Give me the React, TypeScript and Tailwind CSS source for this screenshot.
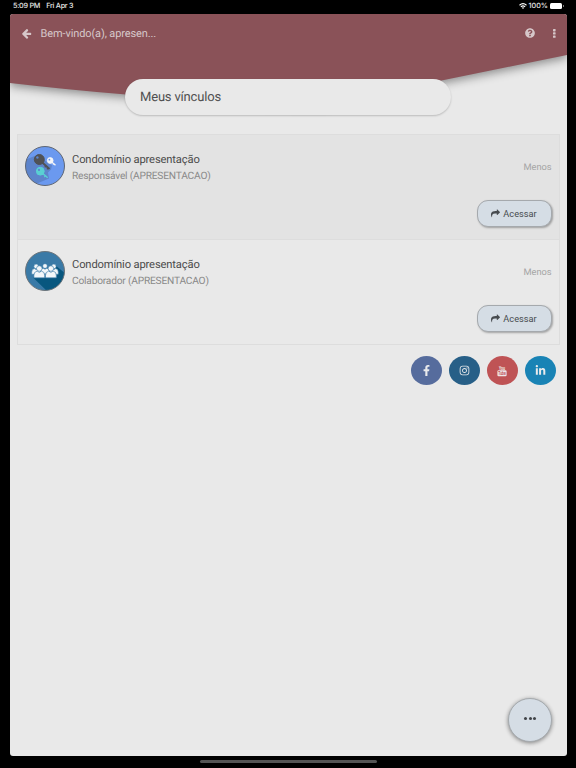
import type { ReactNode } from "react";
import { FaFacebookF, FaInstagram, FaLinkedinIn, FaQuestionCircle } from "react-icons/fa";

interface Membership {
  id: string;
  name: string;
  role: string;
  rowClass: string;
  avatar: ReactNode;
}

const ArrowLeftIcon = () => (
  <svg viewBox="0 0 1792 1792" className="h-[11px] w-[11px] fill-current">
    <path d="M1664 896v128q0 53-32.500 90.500t-84.500 37.500h-704l293 294q38 36 38 90t-38 90l-75 76q-37 37-90 37-52 0-91-37l-651-652q-37-37-37-90 0-52 37-91l651-650q38-38 91-38 52 0 90 38l75 74q38 38 38 91t-38 91l-293 293h704q52 0 84.500 37.500t32.500 90.500z" />
  </svg>
);

const ShareIcon = () => (
  <svg viewBox="0 0 1792 1792" className="h-[9px] w-[9px] fill-current">
    <path d="M1792 640q0 26-19 45l-512 512q-19 19-45 19t-45-19-19-45v-256h-224q-98 0-175.500 6t-154 21.500-133 42.500-105.500 69.500-80 101-48.500 138.500-17.500 181q0 55 5 123 0 6 2.500 23.500t2.500 26.500q0 15-8.500 25t-23.500 10q-16 0-28-17-7-9-13-22t-13.500-30-10.500-24q-127-285-127-451 0-199 53-333 162-403 875-403h224v-256q0-26 19-45t45-19 45 19l512 512q19 19 19 45z" />
  </svg>
);

const YoutubeIcon = () => (
  <svg viewBox="0 0 10 12" className="h-3 w-2.5 overflow-visible">
    <text x="5" y="4.600" textAnchor="middle" textLength="6" lengthAdjust="spacingAndGlyphs" className="fill-[#eee6e6] text-[5px] font-bold">You</text>
    <rect x="0.400" y="5.300" width="9.200" height="6" rx="1.200" fill="#eee6e6" />
    <text x="5" y="9.900" textAnchor="middle" textLength="7.400" lengthAdjust="spacingAndGlyphs" className="fill-[#bf5355] text-[4.500px] font-bold">Tube</text>
  </svg>
);

const KeysAvatar = () => (
  <svg viewBox="0 0 40 40" className="h-10 w-10">
    <clipPath id="keys-clip">
      <circle cx="20" cy="20" r="19.500" />
    </clipPath>
    <g clipPath="url(#keys-clip)">
      <rect width="40" height="40" fill="#6b99ef" />
      <path d="M12 9L1 13.500V34l11 3.500 12-5-1-6 3-3 1-4z" fill="#5d84cb" />
      <g stroke="#505256" fill="#505256">
        <path d="M14.500 14L24.500 23" strokeWidth="2" />
        <path d="M21 20l-1.300 1.300M23.200 22l-1.300 1.300" strokeWidth="1.300" />
        <circle cx="14.300" cy="13.500" r="5" />
      </g>
      <circle cx="12.400" cy="11.500" r="1.200" fill="#5d84cb" />
      <g stroke="#f5f6f8" fill="#f5f6f8">
        <path d="M25 14.500L30.500 19.300" strokeWidth="1.300" />
        <path d="M29 17.800l-1 1" strokeWidth="0.900" />
        <circle cx="25.200" cy="14.500" r="2.900" strokeWidth="0.800" />
      </g>
      <circle cx="24.400" cy="13.700" r="0.900" fill="#6b99ef" />
      <g stroke="#5ad0d3" fill="#5ad0d3">
        <path d="M16 26L22.700 31.800" strokeWidth="1.500" />
        <path d="M20.500 29.800l-1.200 1.200" strokeWidth="1.100" />
        <circle cx="15.300" cy="25.200" r="3.900" />
      </g>
      <circle cx="14" cy="23.900" r="1.100" fill="#5d84cb" />
    </g>
    <circle cx="20" cy="20" r="19.500" fill="none" stroke="#5f6673" />
  </svg>
);

const Person = ({ x, y, scale }: { x: number; y: number; scale: number }) => (
  <g transform={`translate(${x} ${y}) scale(${scale})`} fill="#f3f7fa" stroke="#3a7aa7" strokeWidth="0.700">
    <path d="M-6 12.300V9.500Q-6 5.400-2.400 4.800L0 6.200 2.400 4.800Q6 5.400 6 9.500V12.300Z" />
    <circle cx="0" cy="1.900" r="3.100" />
  </g>
);

const PeopleAvatar = () => (
  <svg viewBox="0 0 40 40" className="h-10 w-10">
    <clipPath id="people-clip">
      <circle cx="20" cy="20" r="19.500" />
    </clipPath>
    <g clipPath="url(#people-clip)">
      <rect width="40" height="40" fill="#3a7aa7" />
      <path d="M30 14L42 24V42H24L8 26.500H32Z" fill="#08577f" />
      <Person x={11.200} y={14} scale={0.750} />
      <Person x={28.800} y={14} scale={0.750} />
      <Person x={20} y={13.600} scale={0.750} />
      <Person x={14.300} y={15.800} scale={0.900} />
      <Person x={25.900} y={15.800} scale={0.900} />
    </g>
    <circle cx="20" cy="20" r="19.500" fill="none" stroke="#6c747a" />
  </svg>
);

const memberships: Membership[] = [
  {
    id: "responsavel",
    name: "Condomínio apresentação",
    role: "Responsável (APRESENTACAO)",
    rowClass: "bg-[#e3e3e3]",
    avatar: <KeysAvatar />
  },
  {
    id: "colaborador",
    name: "Condomínio apresentação",
    role: "Colaborador (APRESENTACAO)",
    rowClass: "bg-[#e9e9e9]",
    avatar: <PeopleAvatar />
  }
];

const socials = [
  { id: "facebook", color: "bg-[#566c9d]", icon: <FaFacebookF className="h-[11px] w-[11px]" /> },
  { id: "instagram", color: "bg-[#275f87]", icon: <FaInstagram className="h-[11px] w-[11px]" /> },
  { id: "youtube", color: "bg-[#bf5355]", icon: <YoutubeIcon /> },
  { id: "linkedin", color: "bg-[#1983b5]", icon: <FaLinkedinIn className="h-[11px] w-[11px]" /> }
];

const StatusBar = () => (
  <div className="flex h-[14px] items-start justify-between pl-[13px] pr-[12px] pt-[1px] font-['Inter','Liberation_Sans',sans-serif] text-[7.200px] font-medium leading-[10px] text-[#e8e8e8]">
    <div className="flex gap-[6px] tracking-[-0.250px]">
      <span>5:09 PM</span>
      <span>Fri Apr 3</span>
    </div>
    <div className="flex items-center gap-[2px]">
      <svg viewBox="0 0 16 12" className="h-[6px] w-[8px] fill-none stroke-white" strokeWidth="2.200">
        <path d="M1 4.500Q8-1.800 15 4.500M3.700 7.600Q8 3.800 12.300 7.600" />
        <path d="M8 12L5.600 9.600Q8 7.700 10.400 9.600Z" fill="white" stroke="none" />
      </svg>
      <span>100%</span>
      <span className="flex items-center gap-px">
        <span className="h-[6px] w-[12px] rounded-[1.500px] bg-white" />
        <span className="h-[2px] w-px bg-[#777]" />
      </span>
    </div>
  </div>
);

const MembershipRow = ({ item }: { item: Membership }) => (
  <div className={`flex h-[105px] flex-col border-b border-[#dddddd] px-[7px] pt-[11px] ${item.rowClass}`}>
    <div className="flex h-10">
      {item.avatar}
      <div className="ml-[7.500px] flex-1 pt-[6px]">
        <h3 className="mb-px text-[11.200px] leading-[16px] tracking-[-0.150px] text-[#4c4c4c]">{item.name}</h3>
        <p className="text-[10.200px] leading-[15px] tracking-[-0.200px] text-[#8a8a8a]">{item.role}</p>
      </div>
      <span className="self-end pb-[12px] text-[9.300px] leading-[12px] tracking-[-0.050px] text-[#a5a5a5]">Menos</span>
    </div>
    <button className="mt-[14px] flex h-[27px] w-[75px] items-center justify-center gap-[3px] self-end rounded-[11px] border border-[#a5a9ad] bg-[#d5dde5] text-[9.200px] text-[#474b4f] shadow-[1px_1px_2px_rgba(0,0,0,0.300)]">
      <ShareIcon />
      Acessar
    </button>
  </div>
);

const App = () => {
  return (
    <div className="flex h-[768px] w-[576px] flex-col bg-black font-['Roboto','Liberation_Sans',sans-serif] [text-rendering:geometricPrecision]">
      <StatusBar />

      <main className="relative mx-auto flex h-[742px] w-[557px] flex-col overflow-hidden rounded-[3px] bg-[#e9e9e9]">
        <svg viewBox="0 0 557 120" className="absolute left-0 top-0 h-[120px] w-[557px] overflow-visible drop-shadow-[0_3px_5px_rgba(0,0,0,0.400)]">
          <path d="M0 0H557V41L434 66L310 90Q200 87 116 80.500Q60 76 0 69Z" fill="#8a5258" />
        </svg>

        <header className="relative flex h-[38px] items-center pl-[11px] pr-[9px] text-[#d6c7c9]">
          <ArrowLeftIcon />
          <h1 className="ml-[9px] flex-1 pt-[2px] text-[11px] leading-[16px] tracking-[-0.110px]">Bem-vindo(a), apresen...</h1>
          <FaQuestionCircle className="mr-[18px] h-[10px] w-[10px]" />
          <svg viewBox="0 0 3 9" className="mr-[2px] h-[9px] w-[3px] fill-current">
            <rect width="2.600" height="2.400" rx="0.600" />
            <rect y="3.200" width="2.600" height="2.400" rx="0.600" />
            <rect y="6.400" width="2.600" height="2.400" rx="0.600" />
          </svg>
        </header>

        <div className="relative ml-[115px] mt-[27px] flex h-[36px] w-[326px] items-center rounded-full bg-[#e9e9e9] pl-[15.500px] pt-[2px] text-[13px] tracking-[-0.180px] text-[#505050] shadow-[0_1px_2px_rgba(0,0,0,0.200)]">
          Meus vínculos
        </div>

        <section className="relative mx-[7px] mt-[19px] border-x border-t border-[#dddddd]">
          {memberships.map((item) => (
            <MembershipRow key={item.id} item={item} />
          ))}
        </section>

        <div className="mr-[11px] mt-[11px] flex justify-end gap-[7px]">
          {socials.map((social) => (
            <button
              key={social.id}
              className={`flex h-[29px] w-[31px] items-center justify-center rounded-[50%] text-[#e9eaec] ${social.color}`}
            >
              {social.icon}
            </button>
          ))}
        </div>

        <button className="absolute bottom-[14px] right-[14.500px] flex h-[44px] w-[44px] items-center justify-center gap-[1.500px] rounded-full border border-[#a5aaae] bg-[#d5dde5] pb-[3px] shadow-[0_1px_4px_rgba(0,0,0,0.450)]">
          <span className="h-[3px] w-[3px] rounded-full bg-[#414448]" />
          <span className="h-[3px] w-[3px] rounded-full bg-[#414448]" />
          <span className="h-[3px] w-[3px] rounded-full bg-[#414448]" />
        </button>
      </main>

      <div className="mx-auto mt-[4px] h-[3px] w-[177px] rounded-full bg-[#545454]" />
    </div>
  );
};

export default App;
